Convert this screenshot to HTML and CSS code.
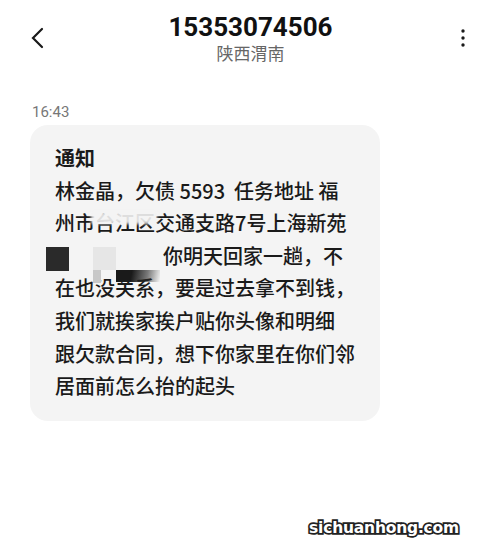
FILE: index.html
```html
<!DOCTYPE html>
<html lang="zh-CN">
<head>
<meta charset="utf-8">
<link rel="stylesheet" href="styles.css">
</head>
<body>
<div class="page">
  <header class="topbar">
    <div class="icon-cell">
      <svg class="back" width="24" height="24" viewBox="0 0 24 24"><polyline points="16,3 7,12 16,21" fill="none" stroke="#1a1a1a" stroke-width="2.2" stroke-linecap="round" stroke-linejoin="miter"/></svg>
    </div>
    <div class="title-block">
      <div class="number">15353074506</div>
      <div class="region">陕西渭南</div>
    </div>
    <div class="icon-cell right">
      <svg class="more" width="8" height="24" viewBox="0 0 8 24"><circle cx="4" cy="5" r="1.7" fill="#1a1a1a"/><circle cx="4" cy="12" r="1.7" fill="#1a1a1a"/><circle cx="4" cy="19" r="1.7" fill="#1a1a1a"/></svg>
    </div>
  </header>

  <section class="thread">
    <div class="time">16:43</div>
    <div class="bubble">
      <div class="msg"><span class="head">通知</span><br>林金晶，欠债 5593&nbsp;&nbsp;任务地址 福<br>州市<span class="smudged">台江区<span class="smudge"></span></span>交通支路7号上海新苑<br><span class="gap"></span>你明天回家一趟，不<br>在也没关系，要是过去拿不到钱，<br>我们就挨家挨户贴你头像和明细<br>跟欠款合同，想下你家里在你们邻<br>居面前怎么抬的起头</div>
      <span class="mask mask-dark"></span>
      <span class="mask mask-light"></span>
      <span class="mask mask-grey"></span>
      <span class="mask mask-fade"></span>
    </div>
  </section>

  <div class="watermark">sichuanhong.com</div>
</div>
</body>
</html>
```
FILE: styles.css
```css
html, body {
  margin: 0;
  padding: 0;
  background: #ffffff;
}
.page {
  width: 501px;
  height: 550px;
  position: relative;
  overflow: hidden;
  font-family: "Noto Sans CJK SC", "Noto Sans", sans-serif;
  color: #1c1c1c;
}
.topbar {
  display: grid;
  grid-template-columns: 60px 1fr 60px;
  align-items: center;
  padding-top: 12px;
}
.icon-cell {
  display: flex;
  align-items: center;
  padding-left: 26px;
}
.icon-cell.right {
  justify-content: flex-start;
  padding-left: 18px;
}
.back, .more {
  display: block;
}
.title-block {
  text-align: center;
}
.number {
  font-family: Roboto, "Liberation Sans", sans-serif;
  font-weight: 700;
  font-size: 26px;
  line-height: 30px;
  color: #111;
}
.region {
  font-size: 17px;
  line-height: 22px;
  color: #666;
}
.thread {
  padding: 38px 0 0 30px;
}
.time {
  font-family: Roboto, "Liberation Sans", sans-serif;
  font-size: 15px;
  line-height: 20px;
  color: #777;
  padding-left: 2px;
}
.bubble {
  position: relative;
  margin-top: 3px;
  width: 350px;
  box-sizing: border-box;
  padding: 17px 20px 18px 25px;
  background: #f4f4f4;
  border-radius: 18px;
}
.msg {
  font-size: 20px;
  font-weight: 500;
  line-height: 32.6px;
  color: #1a1a1a;
  white-space: nowrap;
}
.head {
  font-weight: 700;
}
.smudged {
  position: relative;
}
.smudge {
  position: absolute;
  left: -4px;
  right: -2px;
  top: 4px;
  height: 12px;
  background: rgba(244, 244, 244, 0.9);
  filter: blur(1.5px);
}
.gap {
  display: inline-block;
  width: 108px;
}
.mask {
  position: absolute;
}
.mask-dark {
  left: 16px;
  top: 122px;
  width: 23px;
  height: 24px;
  background: #2a2a2a;
  filter: blur(0.6px);
}
.mask-light {
  left: 63px;
  top: 122px;
  width: 23px;
  height: 23px;
  background: #e6e6e6;
}
.mask-grey {
  left: 63px;
  top: 145px;
  width: 8px;
  height: 13px;
  background: #c8c8c8;
}
.mask-fade {
  left: 86px;
  top: 145px;
  width: 44px;
  height: 12px;
  background: linear-gradient(100deg, #1a1a1a 0%, #1a1a1a 35%, rgba(40,40,40,0.6) 70%, rgba(244,244,244,0) 100%);
}
.watermark {
  position: absolute;
  left: 309px;
  top: 517px;
  font-family: "DejaVu Sans", sans-serif;
  font-weight: 700;
  font-size: 15.5px;
  line-height: 22px;
  letter-spacing: -0.2px;
  color: #ffffff;
  -webkit-text-stroke: 3.4px #222;
  paint-order: stroke fill;
}
```
